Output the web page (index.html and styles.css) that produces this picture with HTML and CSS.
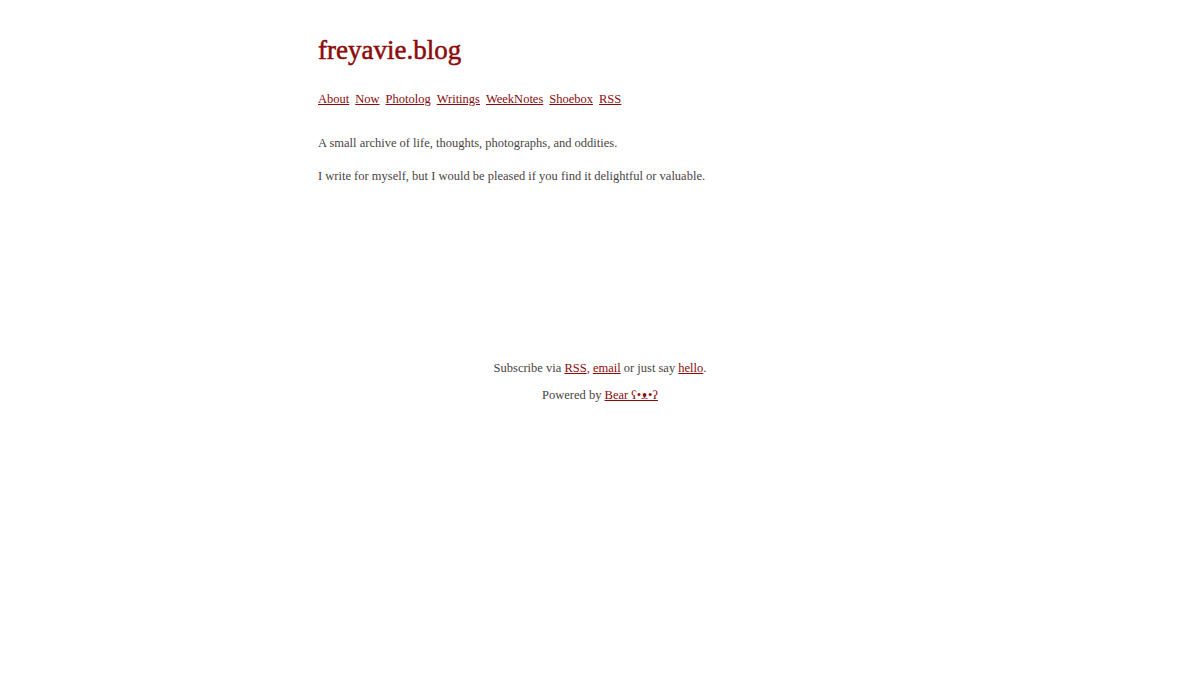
FILE: index.html
```html
<!DOCTYPE html>
<html lang="en">
<head>
<meta charset="utf-8">
<title>freyavie.blog</title>
<link rel="stylesheet" href="styles.css">
</head>
<body>
<div class="page">
  <header class="header">
    <a class="title" href="#"><h1>freyavie.blog</h1></a>
    <nav class="nav">
      <a href="#">About</a>
      <a href="#">Now</a>
      <a href="#">Photolog</a>
      <a href="#">Writings</a>
      <a href="#">WeekNotes</a>
      <a href="#">Shoebox</a>
      <a href="#">RSS</a>
    </nav>
  </header>
  <main class="main">
    <p>A small archive of life, thoughts, photographs, and oddities.</p>
    <p>I write for myself, but I would be pleased if you find it delightful or valuable.</p>
  </main>
  <footer class="footer">
    <p>Subscribe via <a href="#">RSS</a>, <a href="#">email</a> or just say <a href="#">hello</a>.</p>
    <p>Powered by <a href="#">Bear ʕ•ᴥ•ʔ</a></p>
  </footer>
</div>
</body>
</html>
```
FILE: styles.css
```css
html, body {
  margin: 0;
  padding: 0;
  background: #ffffff;
}
body {
  font-family: "Liberation Serif", "DejaVu Serif", serif;
  font-size: 12.5px;
  color: #4a4444;
}
.page {
  width: 564px;
  margin: 0 auto;
  padding-top: 32px;
}
a {
  color: #8b0a0a;
}
.title {
  text-decoration: none;
  color: #8b0a0a;
}
.title h1 {
  margin: 0;
  font-size: 27px;
  font-weight: normal;
  -webkit-text-stroke: 0.5px #8b0a0a;
  line-height: 36px;
  color: #8b0a0a;
}
.nav {
  margin-top: 21px;
  display: flex;
  gap: 6px;
  line-height: 20px;
}
.main {
  margin-top: 24px;
}
.main p {
  margin: 0 0 13px;
  line-height: 20px;
}
.footer {
  margin-top: 172px;
  text-align: center;
}
.footer p {
  margin: 0 0 7px;
  line-height: 20px;
}
```
